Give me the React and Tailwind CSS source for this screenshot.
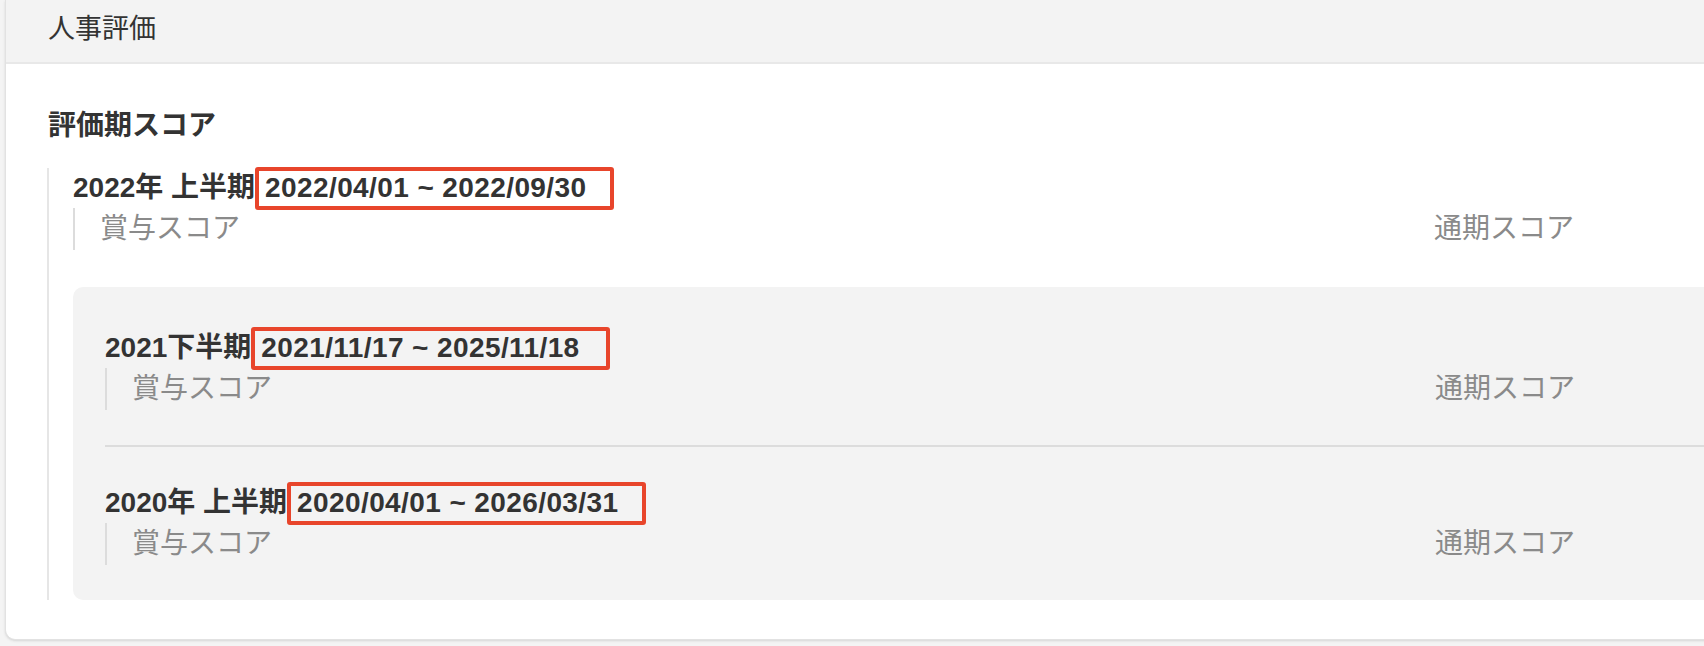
import React from "react";

const FONT = { fontFamily: '"Liberation Sans", "Noto Sans CJK JP", sans-serif' };

function Item({ title, date, nested }) {
  return (
    <div>
      <div className="flex h-[40px] items-center text-[28px] font-bold text-[#333333] whitespace-nowrap">
        <span>{title}</span>
        <div className="flex h-[43px] w-[359px] shrink-0 items-center rounded-[3px] border-[4px] border-[#e8452b] pl-[6px]">
          <span className="tracking-[0.4px]">{date}</span>
        </div>
      </div>
      <div
        className={
          nested
            ? "grid h-[38px] grid-cols-[1330px_1fr] items-center text-[28px] text-[#8a8a8a] whitespace-nowrap"
            : "grid h-[38px] grid-cols-[1361px_1fr] items-center text-[28px] text-[#8a8a8a] whitespace-nowrap"
        }
      >
        <div className="flex h-full items-center border-l-2 border-[#dcdcdc] pl-[25px]">賞与スコア</div>
        <div>通期スコア</div>
      </div>
    </div>
  );
}

export default function App() {
  return (
    <div style={FONT} className="h-[646px] w-full overflow-hidden bg-[#f4f4f4] pl-[5px]">
      <div className="w-[1740px] overflow-hidden rounded-b-[10px] border-l border-b border-[#e2e2e2] bg-white shadow-sm">
        <div className="flex h-[64px] items-center border-b-2 border-[#e8e8e8] bg-[#f3f3f3] pl-[42px] pb-[4px] text-[27px] text-[#333333]">
          人事評価
        </div>
        <div className="pl-[41px] pt-[44px] pb-[39px]">
          <div className="ml-[1px] h-[36px] text-[28px] leading-[36px] font-bold text-[#333333]">評価期スコア</div>
          <div className="mt-[24px] border-l-2 border-[#e6e6e6] pl-[24px]">
            <Item title="2022年 上半期" date="2022/04/01 ~ 2022/09/30" />
            <div className="mt-[41px] rounded-l-[10px] bg-[#f3f3f3] pl-[32px] pt-[41px] pb-[39px]">
              <Item nested title="2021下半期" date="2021/11/17 ~ 2025/11/18" />
              <div className="mt-[39px] mb-[36px] h-[2px] bg-[#dcdcdc]" />
              <Item nested title="2020年 上半期" date="2020/04/01 ~ 2026/03/31" />
            </div>
          </div>
        </div>
      </div>
    </div>
  );
}
